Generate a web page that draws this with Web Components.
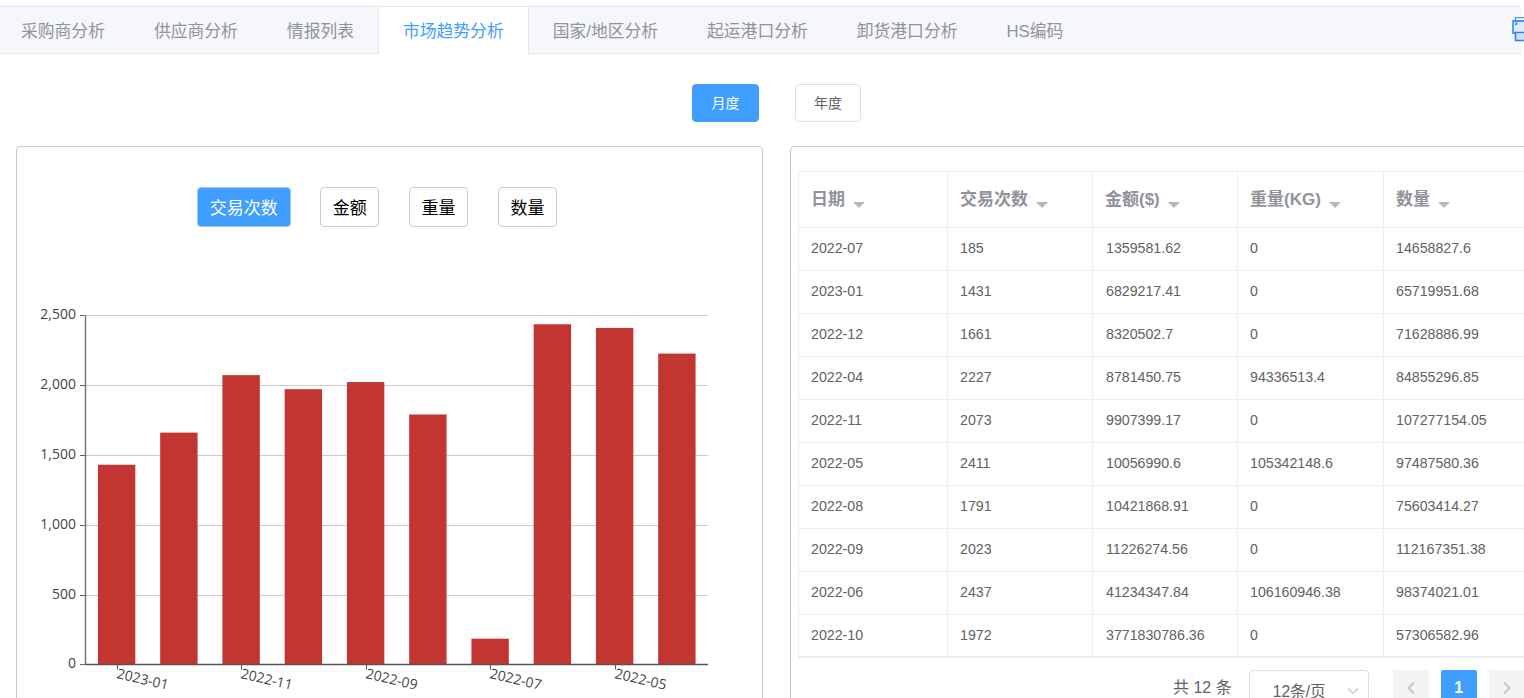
<!DOCTYPE html>
<html lang="zh-CN">
<head>
<meta charset="utf-8">
<title>市场趋势分析</title>
<style>
html,body{margin:0;padding:0;height:698px;overflow:hidden;background:#fff}
body{font-family:"Liberation Sans","Noto Sans CJK SC",sans-serif;}
</style>
</head>
<body>
<x-page>
  <x-tabs slot="tabs">
    <x-tab>采购商分析</x-tab><x-tab>供应商分析</x-tab><x-tab>情报列表</x-tab><x-tab active>市场趋势分析</x-tab><x-tab>国家/地区分析</x-tab><x-tab>起运港口分析</x-tab><x-tab>卸货港口分析</x-tab><x-tab>HS编码</x-tab>
  </x-tabs>
  <x-period slot="period">
    <x-btn small primary>月度</x-btn><x-btn small>年度</x-btn>
  </x-period>
  <x-card slot="left">
    <x-metrics>
      <x-btn primary>交易次数</x-btn><x-btn>金额</x-btn><x-btn>重量</x-btn><x-btn>数量</x-btn>
    </x-metrics>
    <x-bar-chart></x-bar-chart>
  </x-card>
  <x-card slot="right" variant="table">
    <x-data-table></x-data-table>
    <x-pager></x-pager>
  </x-card>
</x-page>
<script>
const FONT='"Liberation Sans","Noto Sans CJK SC",sans-serif';
function def(name,css,html,extra){
  customElements.define(name,class extends HTMLElement{
    constructor(){super();const r=this.attachShadow({mode:'open'});
      r.innerHTML='<style>'+css+'</style>'+(typeof html==='function'?html(this):html);}
    connectedCallback(){if(extra)extra(this)}
  });
}
def('x-page',`
:host{display:block;width:1540px}
.tabs{display:block;margin-top:6px}
.period{display:block;margin-top:30px}
.cols{display:grid;grid-template-columns:747px 760px;column-gap:27px;padding-left:16px;margin-top:24px}
`,`<div class="tabs"><slot name="tabs"></slot></div><div class="period"><slot name="period"></slot></div>
<div class="cols"><slot name="left"></slot><slot name="right"></slot></div>`);

def('x-tabs',`
:host{display:flex;height:46px;box-sizing:content-box;background:#f5f7fa;border-top:1px solid #e4e7ed;border-bottom:1px solid #e4e7ed;width:1524px;position:relative;margin-left:-3.500px}
.wrap{display:flex}
.ico{position:absolute;left:1515.500px;top:10px;width:28px;height:26px}
`,`<div class="wrap"><slot></slot></div>
<svg class="ico" viewBox="0 0 28 26" fill="none">
<path d="M3.500 .500H20.500V5.500H3.500Z" fill="#fff" stroke="#4a94f5" stroke-width="1.400"/>
<path d="M1 4H24V16H1Z" fill="#dcebfd" stroke="#4a94f5" stroke-width="1.800"/>
<rect x="3" y="5.500" width="2.500" height="2.500" fill="#4a94f5"/>
<path d="M3.500 15.500H20.500V23.500H3.500Z" fill="#cfe2fb" stroke="#2f80f0" stroke-width="1.600"/>
</svg>`);

def('x-tab',`
:host{display:flex;align-items:center;height:46px;padding:0 24.500px 1px;font-size:16.800px;color:#909399;white-space:nowrap;box-sizing:border-box;position:relative;font-family:${FONT}}
:host([active]){color:#409eff;background:#fff;box-shadow:inset 1px 0 #e4e7ed,inset -1px 0 #e4e7ed;height:47px;margin-bottom:-1px;padding-right:25.500px;margin-right:-1px;padding-bottom:2px}
`,`<slot></slot>`);

def('x-period',`
:host{display:flex;justify-content:flex-start;gap:36px;padding-left:692px;height:38px}
`,`<slot></slot>`);

def('x-btn',`
:host{display:inline-flex;align-items:center;justify-content:center;box-sizing:border-box;height:40px;padding:0 11.750px 2px;border:1px solid #c9ccd2;border-radius:4px;background:#fff;color:#000;font-size:17px;white-space:nowrap;font-family:${FONT}}
:host([primary]){background:#409eff;color:#fff;border-color:#a9c8ec}
:host([small]){height:38px;width:66px;padding:0 0 2px;font-size:14px;color:#606266;border-color:#dcdfe6}
:host([small][primary]){color:#fff;border-color:#409eff;width:67px}
`,`<slot></slot>`);

def('x-card',`
:host{display:block;box-sizing:border-box;border:1px solid #c8c8c8;border-radius:4px;height:640px;background:#fff}
:host([variant=table]){padding:24px 0 0 7px}
`,`<slot></slot>`);

def('x-metrics',`
:host{display:flex;gap:29.400px;padding:40px 0 0 180px;height:40px}
`,`<slot></slot>`);

/* bar chart */
const VALUES=[1431,1661,2073,1972,2023,1791,185,2437,2411,2227];
const CATS=['2023-01','2022-11','2022-09','2022-07','2022-05'];
def('x-bar-chart',`
:host{display:block;margin-left:-17px;margin-top:0}
svg{display:block;overflow:visible}
text{font-family:"Open Sans","Noto Sans",sans-serif;font-size:14px;fill:#444}
`,()=>{
  const X0=85.5,X1=708,Y0=664.5,YT=315.5,TOP=227;
  const y=v=>Y0-TOP-(Y0-YT)*v/2500;
  const gy=v=>v===0?Y0-TOP:Math.floor(y(v)+.3)+.5;
  const step=(X1-X0)/10,w=37.4;
  let s=`<svg width="740" height="470" viewBox="0 0 740 470">`;
  [500,1000,1500,2000,2500].forEach(v=>{const yy=gy(v);
    s+=`<line x1="${X0}" x2="${X1}" y1="${yy}" y2="${yy}" stroke="#ccc"/>`;});
  VALUES.forEach((v,i)=>{const x=X0+step*i+(step-w)/2;
    s+=`<rect x="${x}" y="${y(v)}" width="${w}" height="${Y0-TOP-y(v)}" fill="#c23531"/>`;});
  s+=`<line x1="${X0}" x2="${X0}" y1="${gy(2500)}" y2="${Y0-TOP}" stroke="#777" stroke-width="1.500"/>`;
  s+=`<line x1="${X0}" x2="${X1}" y1="${Y0-TOP}" y2="${Y0-TOP}" stroke="#555" stroke-width="1.300"/>`;
  [0,500,1000,1500,2000,2500].forEach(v=>{const yy=gy(v);
    s+=`<line x1="80" x2="${X0}" y1="${yy}" y2="${yy}" stroke="#666"/>`;
    s+=`<text x="76" y="${yy+3.500}" text-anchor="end">${v.toLocaleString('en-US')}</text>`;});
  CATS.forEach((c,i)=>{const x=X0+step*(i*2)+step/2;
    const xx=Math.round(x)+.5;
    s+=`<line x1="${xx}" x2="${xx}" y1="${Y0-TOP}" y2="${Y0-TOP+5}" stroke="#555"/>`;
    s+=`<text transform="translate(${xx-1.500} ${Y0-TOP+13.500}) rotate(13)">${c}</text>`;});
  return s+'</svg>';
},(el)=>{});

/* table */
const HEAD=['日期','交易次数','金额($)','重量(KG)','数量'];
const ROWS=[
['2022-07','185','1359581.62','0','14658827.6'],
['2023-01','1431','6829217.41','0','65719951.68'],
['2022-12','1661','8320502.7','0','71628886.99'],
['2022-04','2227','8781450.75','94336513.4','84855296.85'],
['2022-11','2073','9907399.17','0','107277154.05'],
['2022-05','2411','10056990.6','105342148.6','97487580.36'],
['2022-08','1791','10421868.91','0','75603414.27'],
['2022-09','2023','11226274.56','0','112167351.38'],
['2022-06','2437','41234347.84','106160946.38','98374021.01'],
['2022-10','1972','3771830786.36','0','57306582.96']];
def('x-data-table',`
:host{display:block;width:750px;border-bottom:2px solid #ebeef5;border-top:1px solid #ebeef5;border-left:1px solid #ebeef5}
table{border-collapse:separate;border-spacing:0;table-layout:fixed;width:730px}
th,td{box-sizing:border-box;border-right:1px solid #ebeef5;border-bottom:1px solid #ebeef5;padding:0 12px;text-align:left;overflow:hidden;white-space:nowrap}
th{height:56px;font-size:17px;font-weight:700;color:#909399;padding-bottom:5px}
td{height:43px;font-size:14.200px;color:#606266;padding-bottom:2px}
td:nth-child(3){padding-left:13px}
tr:last-child td{border-bottom:0;height:41px;padding-bottom:1px}
.c{display:inline-block;width:0;height:0;border:6px solid transparent;border-top:6px solid #b4b8bf;border-bottom:0;margin-left:8px;vertical-align:-3px}
`,()=>{
  const W=[149,145,145,146,145];
  return `<table><colgroup>${W.map(w=>`<col style="width:${w}px">`).join('')}</colgroup><thead><tr>${HEAD.map(h=>`<th>${h}<span class="c"></span></th>`).join('')}</tr></thead><tbody>${ROWS.map(r=>`<tr>${r.map(c=>`<td>${c}</td>`).join('')}</tr>`).join('')}</tbody></table>`;
});

def('x-pager',`
:host{display:flex;align-items:flex-start;padding:12px 0 0 375px;font-family:${FONT};color:#606266}
.tot{font-size:16px;margin-right:17px;margin-top:4px;white-space:nowrap}
.sel{box-sizing:border-box;width:120px;height:40px;border:1px solid #dcdfe6;border-radius:4px;display:flex;align-items:center;font-size:15.600px;padding-left:23px;position:relative;margin-right:24px;white-space:nowrap}
.sel svg{position:absolute;right:8px;top:16px}
.p{box-sizing:border-box;width:36px;height:36px;border-radius:2px;background:#f4f4f5;display:flex;align-items:center;justify-content:center;margin-right:12px;font-weight:700;font-size:16px}
.p.on{background:#409eff;color:#fff}
`,`<span class="tot">共 12 条</span>
<div class="sel">12条/页<svg width="14" height="8" viewBox="0 0 14 8" fill="none"><path d="M2 1.500 7 6.500 12 1.500" stroke="#c0c4cc" stroke-width="1.200"/></svg></div>
<div class="p"><svg width="10" height="14" viewBox="0 0 10 14" fill="none"><path d="M8 1.500 2.500 7 8 12.500" stroke="#c0c4cc" stroke-width="1.800"/></svg></div>
<div class="p on">1</div>
<div class="p"><svg width="10" height="14" viewBox="0 0 10 14" fill="none"><path d="M2 1.500 7.500 7 2 12.500" stroke="#c0c4cc" stroke-width="1.800"/></svg></div>`);
</script>
</body>
</html>
